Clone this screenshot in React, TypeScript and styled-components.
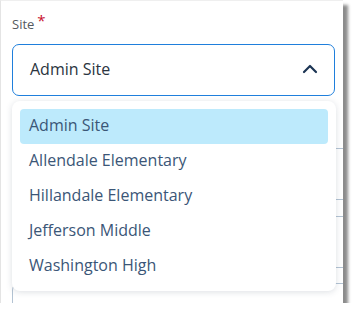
import React from 'react';
import styled, { createGlobalStyle } from 'styled-components';

const GlobalStyle = createGlobalStyle`
  body {
    margin: 0;
    background: #ffffff;
    font-family: 'Open Sans', 'Liberation Sans', sans-serif;
  }
`;

const Window = styled.div`
  position: relative;
  width: 343px;
  height: 303px;
  background: #ffffff;
  border-left: 1px solid #e4e4e4;
  border-top: 1px solid #efefef;
  box-sizing: border-box;
  box-shadow: 5px 5px 3px rgba(0, 0, 0, 0.45);
  overflow: hidden;
`;

const Form = styled.div`
  display: flex;
  flex-direction: column;
  padding: 15px 0 0 11px;
`;

const Label = styled.label`
  display: flex;
  align-items: flex-start;
  font-size: 13px;
  color: #555a60;
  line-height: 16px;
  height: 28px;
`;

const Required = styled.span`
  color: #c8102e;
  font-size: 15px;
  line-height: 10px;
  margin-left: 3px;
  margin-top: -1px;
`;

const SelectBox = styled.div`
  display: flex;
  align-items: center;
  justify-content: space-between;
  width: 323px;
  height: 52px;
  box-sizing: border-box;
  padding: 0 16px 2px 17px;
  border: 1px solid #1f7fdc;
  border-radius: 7px;
  font-size: 16px;
  color: #2b3440;
`;

const Ghost = styled.div<{ gap: number }>`
  width: 340px;
  height: 52px;
  margin-top: ${(p) => p.gap}px;
  border: 1px solid #b3c3d3;
  border-radius: 7px;
  box-sizing: border-box;
  flex-shrink: 0;
`;

const Menu = styled.ul`
  position: absolute;
  left: 11px;
  top: 100px;
  width: 324px;
  height: 190px;
  margin: 0;
  padding: 8px;
  box-sizing: border-box;
  list-style: none;
  background: #ffffff;
  border-radius: 8px;
  box-shadow: 0 1px 6px rgba(60, 80, 100, 0.18);
`;

const Option = styled.li<{ active?: boolean }>`
  display: flex;
  align-items: center;
  height: 35px;
  padding: 0 9px 4px;
  box-sizing: border-box;
  border-radius: 4px;
  font-size: 16px;
  color: #3b5677;
  background: ${(p) => (p.active ? '#bdeafc' : 'transparent')};
`;

const sites = [
  'Admin Site',
  'Allendale Elementary',
  'Hillandale Elementary',
  'Jefferson Middle',
  'Washington High',
];

const Chevron = () => (
  <svg width="16" height="10" viewBox="0 0 16 10" fill="none">
    <path d="M2 8 L8 2 L14 8" stroke="#1c3554" strokeWidth="2.2" strokeLinecap="round" strokeLinejoin="round" />
  </svg>
);

export default function App() {
  return (
    <>
      <GlobalStyle />
      <Window>
        <Form>
          <Label>
            Site<Required>*</Required>
          </Label>
          <SelectBox>
            <span>Admin Site</span>
            <Chevron />
          </SelectBox>
          <Ghost gap={52} />
          <Ghost gap={16} />
          <Ghost gap={15} />
        </Form>
        <Menu>
          {sites.map((s, i) => (
            <Option key={s} active={i === 0}>
              {s}
            </Option>
          ))}
        </Menu>
      </Window>
    </>
  );
}
